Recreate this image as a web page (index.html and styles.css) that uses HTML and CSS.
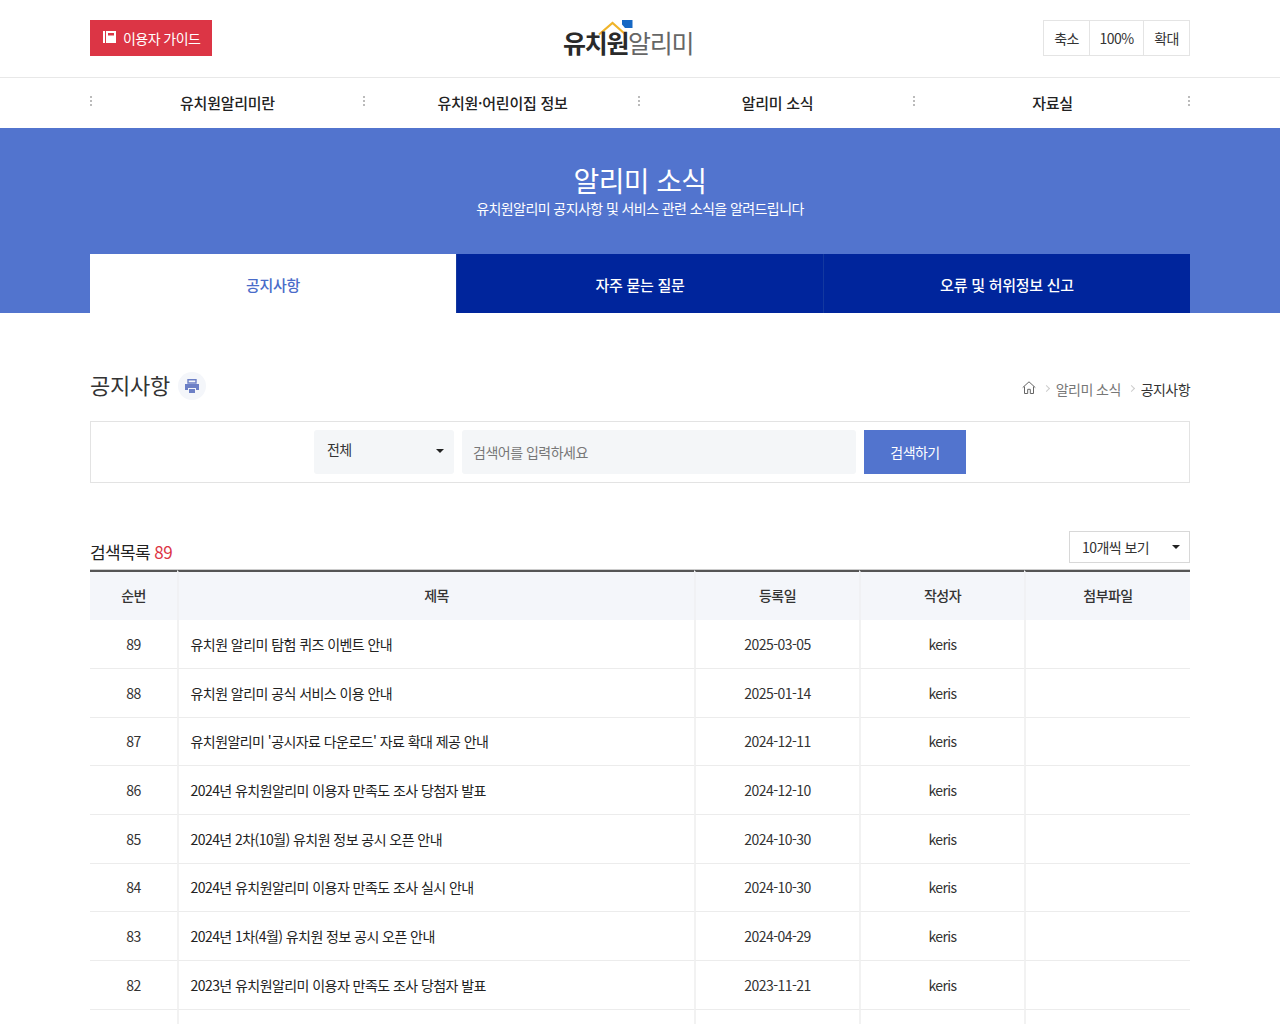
FILE: index.html
```html
<!DOCTYPE html>
<html lang="ko">
<head>
<meta charset="utf-8">
<title>공지사항 - 유치원알리미</title>
<link rel="stylesheet" href="styles.css">
</head>
<body>
<header class="top">
  <div class="wrap top-in">
    <a class="guide" href="#">
      <svg class="guide-ic" viewBox="0 0 13 12" width="13" height="12"><path d="M0 0h2v12H0z" fill="#fff"/><path d="M3 0h10v12H3z" fill="#fff"/><path d="M5 2h6v2.500H5z" fill="#dc3545"/></svg>
      이용자 가이드
    </a>
    <a class="logo" href="#">
      <svg class="roof" viewBox="0 0 36 16" width="36" height="16"><path d="M1 14.500 14.500 3 27 14" fill="none" stroke="#f0b429" stroke-width="2.200"/><path d="M24 0h10.500v8H24z" fill="#1668c4"/><path d="M24 8V4.500l3 3.500z" fill="#fff"/></svg>
      <span class="logo-b">유치원</span><span class="logo-l">알리미</span>
    </a>
    <div class="zoom">
      <button class="zoom-b">축소</button><button class="zoom-b">100%</button><button class="zoom-b">확대</button>
    </div>
  </div>
</header>
<nav class="gnb">
  <ul class="wrap gnb-in">
    <li>유치원알리미란</li>
    <li>유치원·어린이집 정보</li>
    <li>알리미 소식</li>
    <li>자료실</li>
  </ul>
</nav>
<section class="hero">
  <h2 class="hero-t">알리미 소식</h2>
  <p class="hero-s">유치원알리미 공지사항 및 서비스 관련 소식을 알려드립니다</p>
  <div class="wrap tabs">
    <a class="tab on" href="#">공지사항</a>
    <a class="tab" href="#">자주 묻는 질문</a>
    <a class="tab" href="#">오류 및 허위정보 신고</a>
  </div>
</section>
<main class="wrap">
  <div class="head">
    <h3 class="title">공지사항</h3>
    <span class="print">
      <svg viewBox="0 0 14 14" width="14" height="14"><path d="M3 .7h8V4H3z" fill="none" stroke="#6d80c6" stroke-width="1.400"/><path d="M0 5h14v6h-3V9H3v2H0z" fill="#6d80c6"/><path d="M4 10h6v4H4z" fill="#6d80c6"/></svg>
    </span>
    <div class="crumb">
      <svg class="home" viewBox="0 0 14 13" width="14" height="13"><path d="M.7 6.600 7 .8l6.300 5.800M2.500 5.500v7h3.200V8.300h2.600v4.200h3.200v-7" fill="none" stroke="#666" stroke-width="1"/></svg>
      <i class="sep"></i><span class="c-mid">알리미 소식</span><i class="sep"></i><span class="c-end">공지사항</span>
    </div>
  </div>
  <form class="search">
    <div class="sel">전체<i class="caret"></i></div>
    <div class="inp">검색어를 입력하세요</div>
    <button class="go" type="button">검색하기</button>
  </form>
  <div class="list-top">
    <p class="count">검색목록 <em>89</em></p>
    <div class="per">10개씩 보기<i class="caret"></i></div>
  </div>
  <table class="tbl">
    <colgroup><col class="c1"><col class="c2"><col class="c3"><col class="c3"><col></colgroup>
    <thead><tr><th>순번</th><th>제목</th><th>등록일</th><th>작성자</th><th>첨부파일</th></tr></thead>
    <tbody>
      <tr><td>89</td><td class="l">유치원 알리미 탐험 퀴즈 이벤트 안내</td><td>2025-03-05</td><td>keris</td><td></td></tr>
      <tr><td>88</td><td class="l">유치원 알리미 공식 서비스 이용 안내</td><td>2025-01-14</td><td>keris</td><td></td></tr>
      <tr><td>87</td><td class="l">유치원알리미 '공시자료 다운로드' 자료 확대 제공 안내</td><td>2024-12-11</td><td>keris</td><td></td></tr>
      <tr><td>86</td><td class="l">2024년 유치원알리미 이용자 만족도 조사 당첨자 발표</td><td>2024-12-10</td><td>keris</td><td></td></tr>
      <tr><td>85</td><td class="l">2024년 2차(10월) 유치원 정보 공시 오픈 안내</td><td>2024-10-30</td><td>keris</td><td></td></tr>
      <tr><td>84</td><td class="l">2024년 유치원알리미 이용자 만족도 조사 실시 안내</td><td>2024-10-30</td><td>keris</td><td></td></tr>
      <tr><td>83</td><td class="l">2024년 1차(4월) 유치원 정보 공시 오픈 안내</td><td>2024-04-29</td><td>keris</td><td></td></tr>
      <tr><td>82</td><td class="l">2023년 유치원알리미 이용자 만족도 조사 당첨자 발표</td><td>2023-11-21</td><td>keris</td><td></td></tr>
      <tr><td></td><td></td><td></td><td></td><td></td></tr>
    </tbody>
  </table>
</main>
</body>
</html>
```
FILE: styles.css
```css
* { box-sizing: border-box; }
html, body { margin: 0; padding: 0; }
body {
  font-family: "Noto Sans CJK KR", "Noto Sans", sans-serif;
  font-size: 14px;
  color: #222;
  background: #fff;
  letter-spacing: -0.56px;
  height: 1024px;
  overflow: hidden;
}
a { color: inherit; text-decoration: none; }
ul { list-style: none; margin: 0; padding: 0; }
h2, h3, p { margin: 0; font-weight: 400; }
.wrap { width: 1100px; margin: 0 auto; }

.top { height: 78px; border-bottom: 1px solid #e8e8e8; }
.top-in { display: flex; align-items: flex-start; justify-content: space-between; padding-top: 20px; position: relative; }
.guide {
  width: 122px; height: 36px; background: #dc3545; color: #fff;
  display: flex; align-items: center; padding-left: 13px; gap: 7px; font-size: 14px;
  letter-spacing: -0.56px;
}
.guide-ic { flex: none; margin-top: -3px; }
.logo { position: absolute; left: 473px; top: 20px; width: 132px; height: 38px; display: block; white-space: nowrap; font-size: 25px; line-height: 45px; letter-spacing: -1.300px; }
.roof { position: absolute; left: 35px; top: 0; }
.logo-b { font-weight: 700; color: #2a2a2a; position: relative; }
.logo-l { font-weight: 400; color: #666; position: relative; }
.zoom { display: flex; height: 36px; border: 1px solid #e4e4e4; }
.zoom-b {
  font: inherit; letter-spacing: -0.5px; background: #fff; border: 0; color: #333; padding: 0 10px; height: 34px;
  border-left: 1px solid #e4e4e4; font-size: 14px;
}
.zoom-b:first-child { border-left: 0; width: 45px; }
.zoom-b:nth-child(2) { padding: 0 9.500px; }

.gnb { height: 50px; }
.gnb-in { display: grid; grid-template-columns: repeat(4, 275px); }
.gnb-in li {
  height: 50px; line-height: 50px; text-align: center; font-size: 15px; font-weight: 500; color: #222; position: relative;
  letter-spacing: -0.25px;
}
.gnb-in li::after, .gnb-in li:first-child::before {
  content: ""; position: absolute; right: 0; top: 18px; width: 2px; height: 10px;
  background: repeating-linear-gradient(#bbb 0 2px, transparent 2px 4px);
}
.gnb-in li:first-child::before { right: auto; left: 0; }

.hero { height: 185px; background: #5274ce; color: #fff; text-align: center; padding-top: 32px; }
.hero-t { font-size: 28px; line-height: 40px; letter-spacing: -0.6px; }
.hero-s { font-size: 14px; line-height: 22px; margin-top: -3px; letter-spacing: -0.58px; }
.tabs { display: grid; grid-template-columns: 366px 367px 367px; margin-top: 35px; }
.tab { height: 59px; line-height: 61px; background: #00259c; color: #fff; font-size: 15px; font-weight: 500; text-align: center; border-left: 1px solid #13389f; letter-spacing: -0.25px; }
.tab.on { background: #fff; color: #4a6cc9; border-left: 0; }

.head { display: flex; align-items: center; height: 30px; margin-top: 56px; position: relative; }
.title { font-size: 22px; line-height: 30px; letter-spacing: -0.2px; color: #333; }
.print { width: 28px; height: 28px; border-radius: 50%; background: #f4f6fa; margin: 4px 0 0 8px; display: flex; align-items: center; justify-content: center; }
.crumb { margin-left: auto; display: flex; align-items: center; font-size: 14px; color: #777; margin-top: 10px; }
.home { margin-right: 8px; margin-top: -3px; }
.sep { width: 5px; height: 5px; border-top: 1px solid #ccc; border-right: 1px solid #ccc; transform: rotate(45deg); margin-right: 7px; margin-top: -2px; }
.c-mid { margin-right: 8px; }
.c-end { color: #333; }

.search {
  height: 62px; margin-top: 22px; border: 1px solid #e3e3e3;
  display: flex; padding: 8px 0 0 223px;
}
.sel { width: 140px; height: 44px; background: #f4f6f8; border-radius: 3px; padding-left: 13px; line-height: 38px; position: relative; color: #333; }
.caret { position: absolute; right: 10px; top: 19px; width: 0; height: 0; border: 4px solid transparent; border-top-color: #222; border-bottom: 0; }
.inp { width: 394px; height: 44px; margin-left: 8px; background: #f4f6f8; border-radius: 3px; padding-left: 11px; line-height: 44px; color: #777; letter-spacing: -0.5px; }
.go { width: 102px; height: 44px; margin-left: 8px; border: 0; background: #5274ce; color: #fff; font: inherit; letter-spacing: -0.56px; padding: 0; }

.list-top { display: flex; justify-content: space-between; align-items: flex-end; margin-top: 48px; height: 38px; }
.count { font-size: 17px; line-height: 24px; letter-spacing: -0.6px; margin-bottom: 5px; }
.count em { font-style: normal; color: #dc3545; }
.per { width: 121px; height: 32px; margin-bottom: 6px; border: 1px solid #d8d8d8; padding-left: 12px; line-height: 30px; position: relative; color: #333; }
.per .caret { top: 13px; right: 9px; }

.tbl { width: 1100px; border-collapse: separate; border-spacing: 0; table-layout: fixed; border-top: 1px solid #ccc; }
.c1 { width: 87px; }
.c2 { width: 517px; }
.c3 { width: 165px; }
.tbl th { height: 50.400px; padding: 0 0 2px; background: #f4f6fa; font-weight: 500; font-size: 14px; color: #333; border-top: 2px solid #555; border-left: 2px solid #f0f1f4; }
.tbl td { height: 48.650px; text-align: center; font-size: 14px; color: #333; border-left: 2px solid #f2f2f2; border-bottom: 1px solid #ececec; padding: 0; }
.tbl th:first-child, .tbl td:first-child { border-left: 0; }
.tbl td.l { text-align: left; padding-left: 11.500px; color: #222; }
```
